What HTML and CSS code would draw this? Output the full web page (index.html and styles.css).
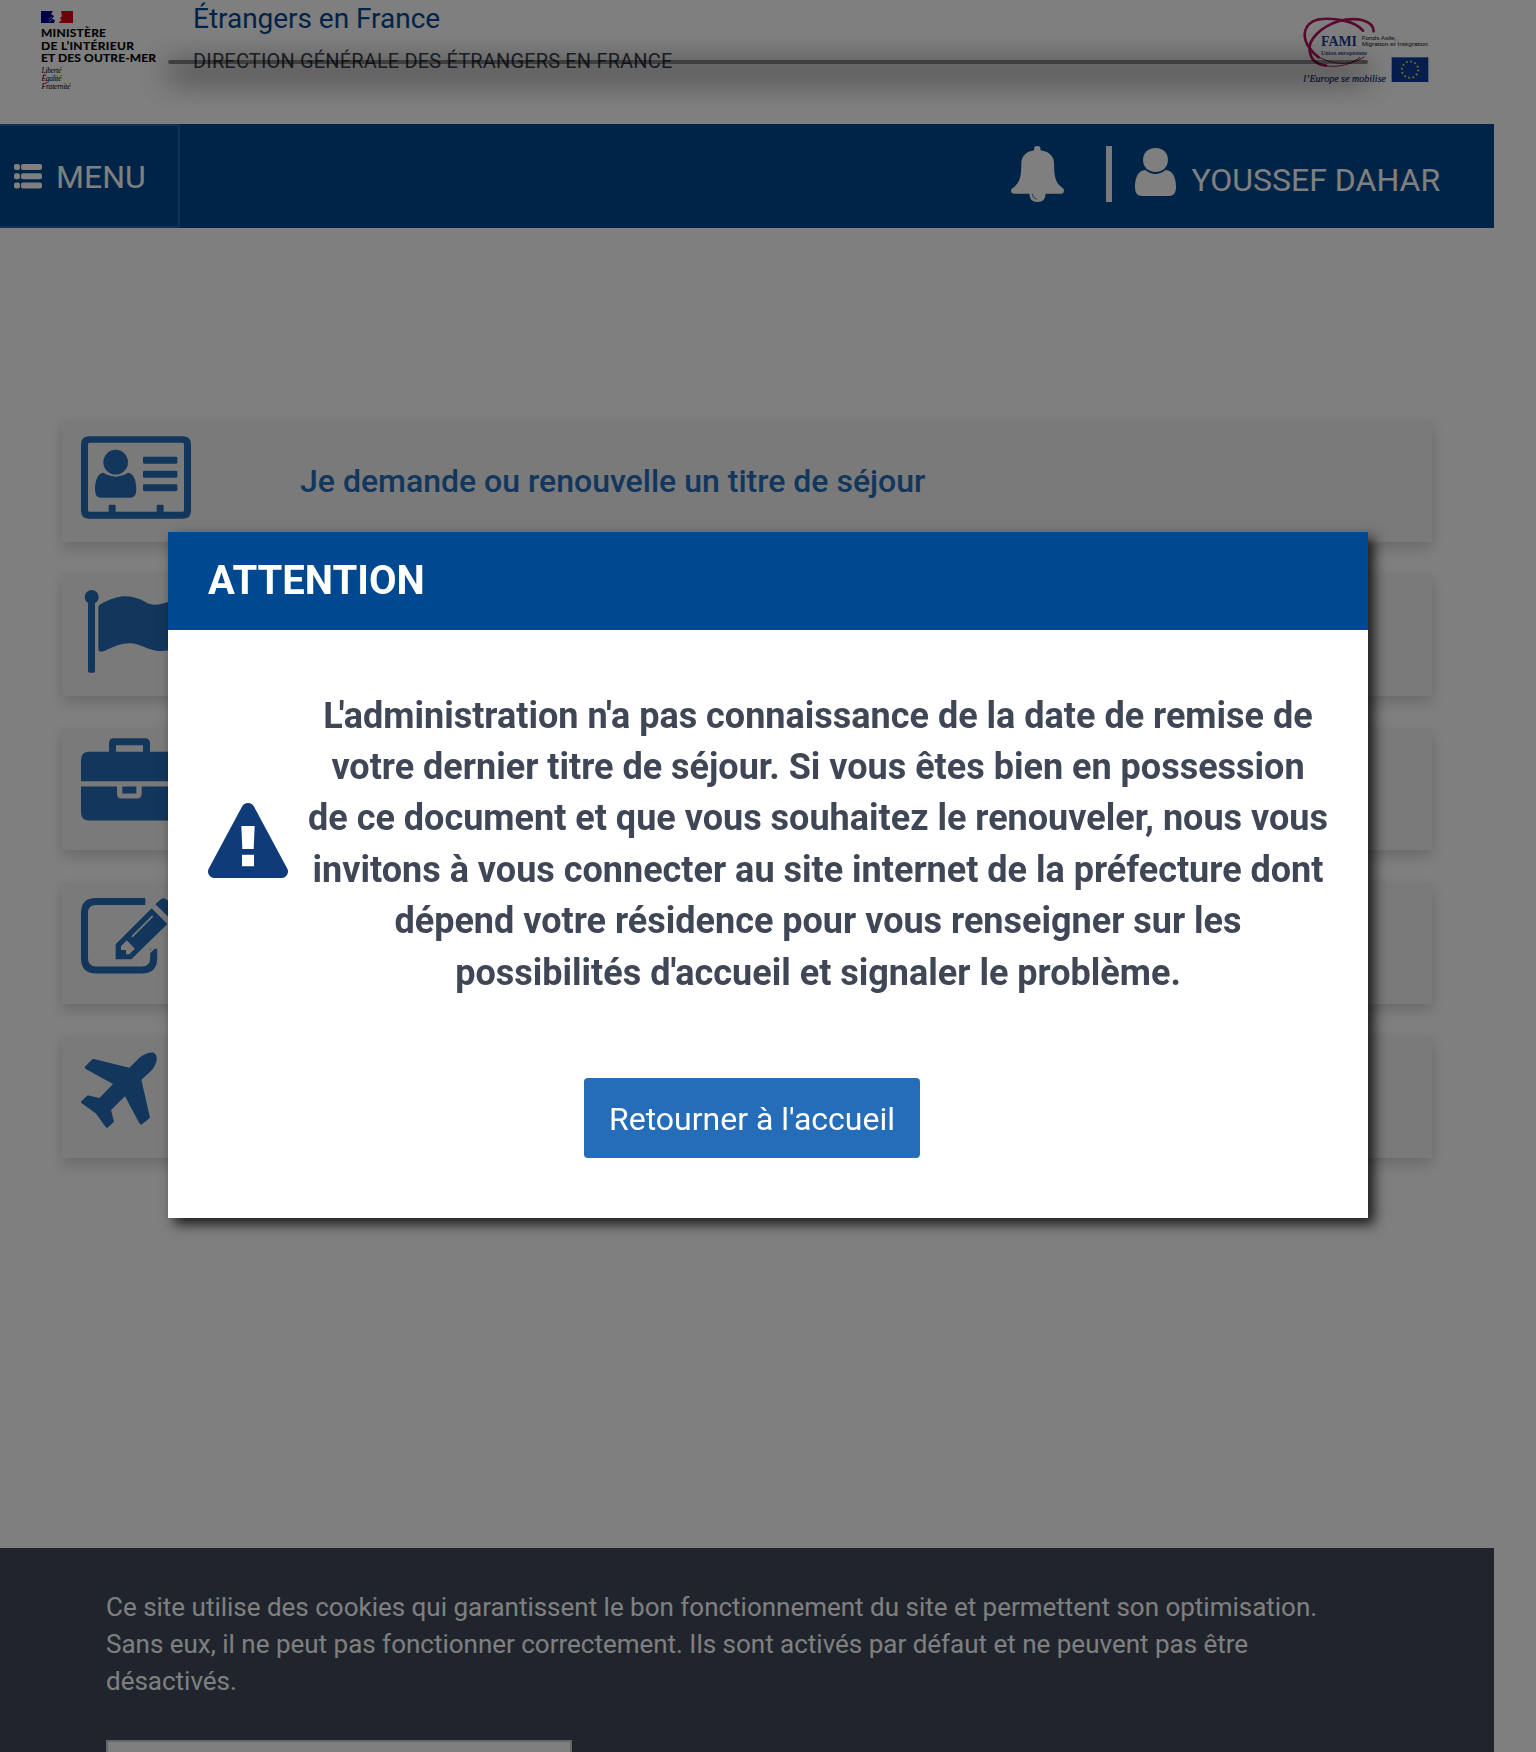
FILE: index.html
```html
<!DOCTYPE html>
<html lang="fr">
<head>
<meta charset="utf-8">
<title>Étrangers en France</title>
<link rel="stylesheet" href="styles.css">
</head>
<body>
<div class="page">
  <header class="site-header">
    <svg class="logo-ministry" width="120" height="84" viewBox="0 0 120 84">
      <path fill="#000091" d="M1 3h12l-2 3 3 2-2 3 3 1-1 3H1z"/>
      <path fill="#e1000f" d="M21 3h12v12H18.500l3-3-1.500-2 2-2z"/>
      <path fill="none" stroke="#8f8fc9" d="M9 11l3-2M9 13.500l3-2"/>
      <g class="ministry-name">
        <text x="1" y="29" textLength="65">MINISTÈRE</text>
        <text x="1" y="41.700" textLength="93">DE L’INTÉRIEUR</text>
        <text x="1" y="54.200" textLength="115">ET DES OUTRE-MER</text>
      </g>
      <g class="ministry-motto">
        <text x="1.500" y="65" textLength="20">Liberté</text>
        <text x="1.500" y="73" textLength="20">Égalité</text>
        <text x="1.500" y="81" textLength="29">Fraternité</text>
      </g>
    </svg>
    <div class="site-title">
      <div class="site-name">Étrangers en France</div>
      <div class="site-direction">DIRECTION GÉNÉRALE DES ÉTRANGERS EN FRANCE</div>
    </div>
    <svg class="logo-fami" width="130" height="76" viewBox="126 42 390 228">
      <g fill="none" stroke="#b5125f" stroke-linecap="round">
        <path stroke-width="8" d="M341 94C340 62 290 48 235 64C185 80 143 118 149 152C152 178 170 194 198 197"/>
        <path stroke-width="8" d="M309 92C285 62 218 51 172 59C132 70 124 108 147 142C154 153 163 163 176 172"/>
        <path stroke-width="3" d="M170 184C190 204 235 202 270 190C290 183 304 177 312 171M147 144C170 180 230 196 270 188C283 184 293 178 299 172"/>
      </g>
      <text class="fami-name" x="183" y="137" textLength="108" lengthAdjust="spacingAndGlyphs">FAMI</text>
      <text class="fami-union" x="183" y="164" textLength="138" lengthAdjust="spacingAndGlyphs">Union européenne</text>
      <text class="fami-fund" x="305" y="120" textLength="104" lengthAdjust="spacingAndGlyphs">Fonds Asile,</text>
      <text class="fami-fund" x="305" y="138" textLength="199" lengthAdjust="spacingAndGlyphs">Migration et Intégration</text>
      <text class="fami-slogan" x="130" y="245" textLength="248" lengthAdjust="spacingAndGlyphs">l’Europe se mobilise</text>
      <rect x="395" y="172" width="110" height="74" fill="#0b3c9c"/>
      <circle cx="450" cy="209" r="24.500" fill="none" stroke="#e8d94a" stroke-width="6" stroke-dasharray="5 7.828"/>
    </svg>
  </header>

  <nav class="navbar">
    <div class="menu-toggle">
      <svg width="28" height="25" viewBox="0 0 28 25" fill="#fff">
        <rect width="6" height="6" rx="2"/><rect x="7" width="21" height="6" rx="2"/>
        <rect y="9.300" width="6" height="6" rx="2"/><rect x="7" y="9.300" width="21" height="6" rx="2"/>
        <rect y="18.600" width="6" height="6" rx="2"/><rect x="7" y="18.600" width="21" height="6" rx="2"/>
      </svg>
      <span>MENU</span>
    </div>
    <svg class="bell" width="53" height="56" viewBox="139 108 144 168" preserveAspectRatio="none">
      <path fill="#fff" d="M202 121V115Q202 108 210.500 108Q219 108 219 115V121C243 125 256 139 256 161C256 201 260 219 280 235Q283 238 283 242Q283 251 274 251H233Q233 276 211 276Q189 276 189 251H149Q139 251 139 242Q139 238 143 235C163 219 167 201 167 161C167 139 180 125 202 121Z"/>
      <path fill="none" stroke="#00488f" stroke-width="2" d="M197 251Q198 267 210 267"/>
    </svg>
    <span class="separator"></span>
    <svg class="user" width="41" height="48" viewBox="476 114 112 144" preserveAspectRatio="none" fill="#fff">
      <path d="M532 114C554 114 566 129 566 150C566 171 552 186 532 186C512 186 498 171 498 150C498 129 510 114 532 114Z"/>
      <path d="M504 180Q531 204 560 180C579 181 588 203 588 229C588 247 584 258 568 258H496C480 258 476 247 476 229C476 203 485 181 504 180Z"/>
    </svg>
    <span class="user-name">YOUSSEF DAHAR</span>
  </nav>

  <main class="services">
    <div class="card">
      <svg width="110" height="83" viewBox="123 109 330 248" fill="#266cb9">
        <path fill-rule="evenodd" d="M148 109H428Q453 109 453 134V332Q453 357 428 357H148Q123 357 123 332V134Q123 109 148 109ZM149 129Q144 129 144 134V331Q144 336 149 336H206V319Q206 315 210 315H223Q227 315 227 319V336H350V319Q350 315 354 315H367Q371 315 371 319V336H427Q432 336 432 331V134Q432 129 427 129Z"/>
        <circle cx="227" cy="187" r="37"/>
        <path d="M190 219Q227 242 264 219C281 220 289 243 289 269Q289 294 270 294H183Q165 294 165 269C165 243 173 220 190 219Z"/>
        <rect x="309" y="171" width="103" height="21" rx="4"/><rect x="309" y="213" width="103" height="21" rx="4"/><rect x="309" y="253" width="103" height="21" rx="4"/>
      </svg>
      <span class="card-title">Je demande ou renouvelle un titre de séjour</span>
    </div>
    <div class="card">
      <svg width="120" height="83" viewBox="123 571 360 249" fill="#266cb9">
        <circle cx="155" cy="592" r="21"/><rect x="144" y="597" width="21" height="222" rx="5"/>
        <path d="M175 624Q175 617 181 614C240 582 275 584 320 609C365 630 400 590 453 590V725C410 754 360 763 320 745C275 722 245 727 193 754Q175 760 175 747Z"/>
      </svg>
    </div>
    <div class="card card-briefcase">
      <svg width="96" height="83" viewBox="123 113 288 248" fill="#266cb9">
        <path fill-rule="evenodd" d="M207 154V128Q207 113 222 113H315Q330 113 330 128V154H386Q411 154 411 179V242H123V179Q123 154 148 154ZM228 154H309V134H228Z"/>
        <path d="M123 258H231V280Q231 294 244 294H291Q305 294 305 280V258H411V335Q411 360 386 360H148Q123 360 123 335Z"/><rect x="247" y="258" width="42" height="21"/>
      </svg>
    </div>
    <div class="card">
      <svg width="94" height="76" viewBox="123 596 282 228">
        <path fill="none" stroke="#266cb9" stroke-width="21" d="M316 606.500H168Q133.500 606.500 133.500 641V777Q133.500 812 168 812H306Q341 812 341 777V748"/>
        <path fill="#266cb9" d="M227 735L335 627L382 674L274 780H227ZM346 615L360 602Q370 592 382 602L402 622Q412 633 402 643L389 656Z"/>
        <path fill="#f4f4f4" d="M243 741L260 723L285 748L268 765H258V752H243ZM318 596H331V603L318 618ZM329 754L352 732V741L329 763Z"/>
        <path fill="none" stroke="#f4f4f4" stroke-width="5" stroke-linecap="round" d="M277 711L337 651"/>
      </svg>
    </div>
    <div class="card">
      <svg width="76" height="76" viewBox="123 157 228 228" fill="#266cb9">
        <path d="M268 204L300 173Q322 156 342 159Q352 166 350 180Q347 199 333 214L304 240L330 354L304 375L298 371L255 290L213 331L222 366L202 385L197 382L167 341L125 311Q121 307 125 304L143 287L178 295L219 253L136 207L134 202L157 179L162 178Z"/>
      </svg>
    </div>
  </main>

  <section class="cookies">
    <p>Ce site utilise des cookies qui garantissent le bon fonctionnement du site et permettent son optimisation.<br>Sans eux, il ne peut pas fonctionner correctement. Ils sont activés par défaut et ne peuvent pas être<br>désactivés.</p>
    <div class="cookie-button"></div>
  </section>
</div>

<div class="collapsed-dialog"></div>
<div class="backdrop"></div>

<div class="modal" role="alertdialog">
  <h1 class="modal-title">ATTENTION</h1>
  <div class="modal-body">
    <div class="modal-message">
      <svg class="warning" width="80" height="75" viewBox="504 309 240 225">
        <path fill="#0f3b78" d="M607 318Q613 309 624 309Q635 309 641 318L742 506Q746 514 742 523Q737 534 725 534H523Q511 534 506 523Q502 514 506 506Z"/>
        <path fill="#fff" d="M604 378H644L641 447H607ZM606 464H642V499H606Z"/>
      </svg>
      <p><span class="tight">L</span>'administration n'a pas connaissance de la date de remise de<br>votre dernier titre de séjour. Si vous êtes bien en possession<br>de ce document et que vous souhaitez le renouveler, nous vous<br>invitons à vous connecter au site internet de la préfecture dont<br>dépend votre résidence pour vous renseigner sur les<br>possibilités d'accueil et signaler le problème.</p>
    </div>
    <button class="home-button" type="button">Retourner à l'accueil</button>
  </div>
</div>
</body>
</html>
```
FILE: styles.css
```css
* { box-sizing: border-box; }
html, body { height: 1752px; overflow: hidden; }
body { margin: 0; background: #fff; font-family: Roboto, "Liberation Sans", sans-serif; color: #3f4655; }
svg { display: block; flex: none; }
p { margin: 0; }

.page { width: 1494px; height: 1752px; display: flex; flex-direction: column; overflow: hidden; }

.site-header { height: 124px; flex: none; display: flex; align-items: flex-start; padding-left: 40px; }
.logo-ministry { margin-top: 8px; }
.ministry-name { font: 700 12px Lato, sans-serif; fill: #000; stroke: #000; stroke-width: .2px; }
.ministry-motto { font: italic 7.500px "Liberation Serif", serif; fill: #000; }
.site-title { margin-left: 33px; width: 1109px; white-space: nowrap; }
.site-name { height: 41px; font-size: 28px; line-height: 38px; letter-spacing: -.03px; color: #00488f; }
.site-direction { font-size: 20px; line-height: 40px; letter-spacing: .16px; }
.logo-fami { margin-top: 14px; }
.fami-name { font: bold 42px "Liberation Serif", serif; fill: #1d3f9a; }
.fami-union { font: bold 17px "Liberation Serif", serif; fill: #3b56a3; }
.fami-fund { font: 18px "Liberation Sans", sans-serif; fill: #444; stroke: #444; stroke-width: .3px; }
.fami-slogan { font: italic 31px "Liberation Serif", cursive; fill: #16307c; stroke: #16307c; stroke-width: .6px; }

.navbar { height: 104px; flex: none; display: flex; background: #00488f; color: #fff; font-size: 32px; white-space: nowrap; }
.menu-toggle { width: 180px; border: 2px solid #1f66b0; border-left: 0; display: flex; align-items: center; gap: 14px; padding: 1px 0 0 14px; }
.bell { margin: 22px 0 0 831px; }
.separator { width: 6px; height: 56px; margin: 22px 0 0 42px; background: #f4f4f4; }
.user { margin: 24px 0 0 23px; }
.user-name { margin: 37px 0 0 15.500px; line-height: 38px; }

.services { height: 1320px; flex: none; padding: 192px 62px 0; display: flex; flex-direction: column; gap: 32px; }
.card { height: 122px; flex: none; display: flex; align-items: flex-start; padding: 16px 19px; background: #f4f4f4; box-shadow: 0 6px 14px rgba(0,0,0,.18); }
.card-briefcase { padding-top: 10px; }
.card-title { margin-left: 109px; font-size: 32px; line-height: 58px; padding-top: 16px; font-weight: 500; color: #266cb9; white-space: nowrap; }

.cookies { flex: 1; background: #404958; color: #fff; padding: 41px 106px 0; font-size: 26px; line-height: 37.140px; letter-spacing: -.01px; white-space: nowrap; }
.cookie-button { width: 466px; height: 80px; margin-top: 39.580px; background: #fff; border: 2px solid #ccc; }

.collapsed-dialog { position: absolute; left: 168px; top: 60px; width: 1200px; height: 4px; border-radius: 2px; background: rgba(0,0,0,.5); box-shadow: 0 10px 30px rgba(0,0,0,.5), 0 10px 30px rgba(0,0,0,.5), 0 10px 30px rgba(0,0,0,.5), 0 10px 30px rgba(0,0,0,.5); }
.backdrop { position: fixed; inset: 0; background: rgba(0,0,0,.5); }

.modal { position: absolute; left: 168px; top: 532px; width: 1200px; height: 686px; background: #fff; box-shadow: 6px 6px 12px rgba(0,0,0,.8); }
.modal-title { margin: 0; height: 98px; padding-left: 40px; background: #004990; color: #fff; font-size: 40px; line-height: 98px; font-weight: 700; }
.modal-body { padding: 60.500px 40px 0; }
.modal-message { display: flex; align-items: center; gap: 20px; }
.warning { position: relative; top: -4px; }
.modal-message p { flex: 1; text-align: center; font-size: 36px; line-height: 51.430px; font-weight: 700; white-space: nowrap; }
.tight { letter-spacing: -4px; }
.home-button { display: block; width: 336px; height: 80px; margin: 78.900px 0 0 376px; padding: 1px 0 0; border: 0; border-radius: 4px; background: #256cb9; color: #fff; font: 32px Roboto, sans-serif; }
```
